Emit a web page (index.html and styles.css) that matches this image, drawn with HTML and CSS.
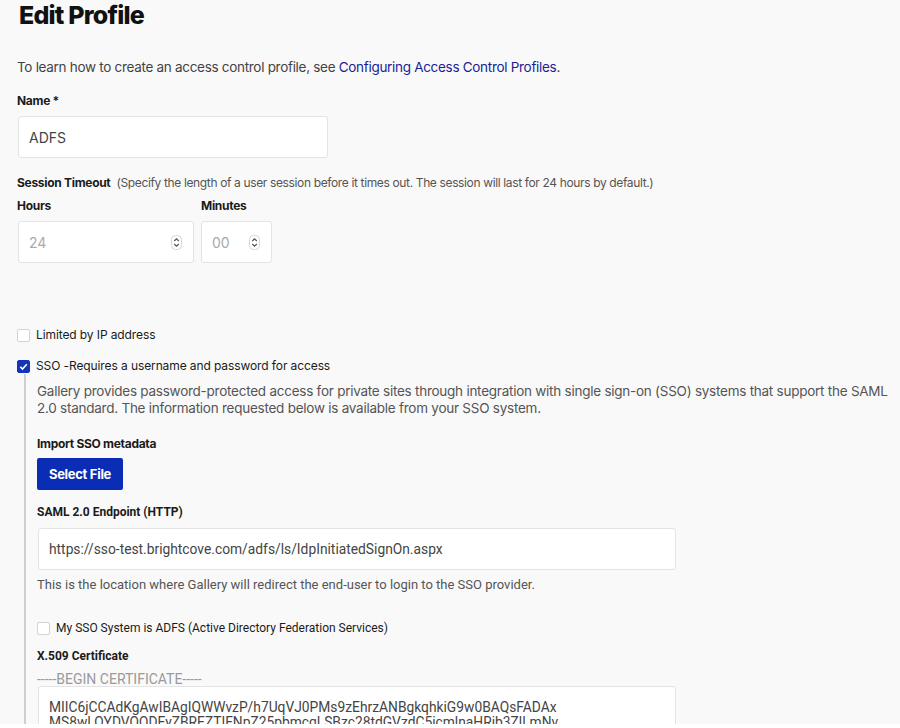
FILE: index.html
```html
<!DOCTYPE html>
<html>
<head>
<meta charset="utf-8">
<link rel="stylesheet" href="styles.css">
</head>
<body>
<div class="page">
  <h1 class="title">Edit Profile</h1>
  <p class="intro">To learn how to create an access control profile, see <a class="link" href="#">Configuring Access Control Profiles</a>.</p>

  <div class="label name-label">Name *</div>
  <div class="field name-field"><span class="val">ADFS</span></div>

  <div class="timeout-row"><span class="label">Session Timeout</span><span class="hint">(Specify the length of a user session before it times out. The session will last for 24 hours by default.)</span></div>

  <div class="time-grid">
    <div class="time-col">
      <div class="label">Hours</div>
      <div class="field num hours"><span class="ph">24</span>
        <svg class="spin" width="11" height="15" viewBox="0 0 11 15"><rect x="0.5" y="0.5" width="10" height="14" rx="4" fill="#fff" stroke="#d6d6d6"/><path d="M3.2 6 L5.5 3.8 L7.8 6" fill="none" stroke="#555" stroke-width="1.2"/><path d="M3.2 9 L5.5 11.2 L7.8 9" fill="none" stroke="#555" stroke-width="1.2"/></svg>
      </div>
    </div>
    <div class="time-col">
      <div class="label">Minutes</div>
      <div class="field num minutes"><span class="ph">00</span>
        <svg class="spin" width="11" height="15" viewBox="0 0 11 15"><rect x="0.5" y="0.5" width="10" height="14" rx="4" fill="#fff" stroke="#d6d6d6"/><path d="M3.2 6 L5.5 3.8 L7.8 6" fill="none" stroke="#555" stroke-width="1.2"/><path d="M3.2 9 L5.5 11.2 L7.8 9" fill="none" stroke="#555" stroke-width="1.2"/></svg>
      </div>
    </div>
  </div>

  <div class="check-row ip-row"><span class="box"></span><span class="check-text">Limited by IP address</span></div>
  <div class="check-row sso-row"><span class="box checked"><svg width="13" height="13" viewBox="0 0 13 13"><path d="M3.3 6.8 L5.5 9 L9.8 4.2" fill="none" stroke="#fff" stroke-width="1.6"/></svg></span><span class="check-text">SSO -Requires a username and password for access</span></div>

  <div class="sso-section">
    <p class="sso-desc">Gallery provides password-protected access for private sites through integration with single sign-on (SSO) systems that support the SAML 2.0 standard. The information requested below is available from your SSO system.</p>
    <div class="label import-label">Import SSO metadata</div>
    <button class="btn">Select File</button>

    <div class="label2 saml-label">SAML 2.0 Endpoint (HTTP)</div>
    <div class="field wide"><span class="val2">https://sso-test.brightcove.com/adfs/ls/IdpInitiatedSignOn.aspx</span></div>
    <div class="help">This is the location where Gallery will redirect the end-user to login to the SSO provider.</div>

    <div class="check-row adfs-row"><span class="box"></span><span class="check-text2">My SSO System is ADFS (Active Directory Federation Services)</span></div>

    <div class="label2 cert-label">X.509 Certificate</div>
    <div class="cert-begin">-----BEGIN CERTIFICATE-----</div>
    <div class="field wide cert">
      <div class="val2">MIIC6jCCAdKgAwIBAgIQWWvzP/h7UqVJ0PMs9zEhrzANBgkqhkiG9w0BAQsFADAx</div>
      <div class="val2">MS8wLQYDVQQDEyZBREZTIFNpZ25pbmcgLSBzc28tdGVzdC5icmlnaHRib3ZlLmNv</div>
    </div>
  </div>
</div>
</body>
</html>
```

FILE: styles.css
```css
html {
  margin: 0;
  padding: 0;
  background: #fff;
}
body {
  margin: 0;
  padding: 0;
  background: #f9f9f9;
  font-family: "Inter", "Noto Sans", sans-serif;
  color: #1b1b1b;
  height: 724px;
  overflow: hidden;
}
.page {
  padding: 0 0 0 17px;
}
.title {
  margin: 0;
  padding: 0 0 0 2px;
  font-size: 25px;
  font-weight: 800;
  line-height: 30px;
  letter-spacing: -0.8px;
  color: #111;
}
.intro {
  margin: 27px 0 0;
  font-size: 13.5px;
  line-height: 20px;
  color: #444;
  letter-spacing: -0.3px;
}
.link {
  color: #1a1d96;
  text-decoration: none;
}
.label {
  font-size: 12px;
  font-weight: 700;
  line-height: 16px;
  color: #1b1b1b;
  letter-spacing: -0.3px;
}
.name-label {
  margin-top: 16px;
}
.field {
  box-sizing: border-box;
  background: #fff;
  border: 1px solid #e4e4e4;
  border-radius: 3px;
  height: 42px;
  display: flex;
  align-items: center;
}
.name-field {
  margin: 7px 0 0 1px;
  width: 310px;
  padding-left: 10px;
}
.val {
  font-size: 14px;
  color: #444;
}
.timeout-row {
  margin-top: 17px;
  display: flex;
  align-items: baseline;
  gap: 6px;
}
.hint {
  font-size: 12px;
  color: #555;
  letter-spacing: -0.36px;
}
.time-grid {
  margin-top: 7px;
  display: flex;
  gap: 7px;
}
.time-col .label {
  margin-bottom: 7px;
}
.num {
  margin-left: 1px;
  padding: 0 11px 0 10px;
  justify-content: space-between;
}
.hours { width: 176px; }
.minutes { width: 71px; margin-left: 0; }
.ph {
  font-size: 14px;
  color: #aaa;
}
.check-row {
  display: flex;
  align-items: center;
  gap: 6px;
}
.box {
  box-sizing: border-box;
  width: 13px;
  height: 13px;
  border: 1px solid #d3d3d3;
  border-radius: 2px;
  background: #fff;
  display: flex;
}
.box.checked {
  background: #1535b8;
  border-color: #1535b8;
}
.box.checked svg {
  margin: -1px;
}
.check-text {
  font-size: 12px;
  color: #1b1b1b;
  line-height: 16px;
  letter-spacing: -0.1px;
}
.ip-row {
  margin-top: 64px;
}
.sso-row {
  margin-top: 15px;
}
.sso-section {
  margin-left: 7px;
  border-left: 2px solid #cfcfcf;
  padding-left: 10px;
  padding-top: 1px;
  padding-bottom: 40px;
}
.sso-desc {
  margin: 8px 0 0 1px;
  font-size: 13.5px;
  line-height: 17px;
  color: #555;
  letter-spacing: -0.25px;
}
.import-label {
  margin: 19px 0 0 1px;
}
.btn {
  margin: 6px 0 0 1px;
  width: 86px;
  height: 32px;
  border: none;
  border-radius: 2px;
  background: #0b2db5;
  color: #fff;
  font-family: "Inter", sans-serif;
  font-size: 13px;
  font-weight: 700;
  letter-spacing: -0.3px;
  padding: 0;
}
.label2 {
  font-family: "Roboto", sans-serif;
  font-size: 12px;
  font-weight: 700;
  line-height: 16px;
  color: #1b1b1b;
  margin-left: 1px;
}
.saml-label {
  margin-top: 14px;
}
.wide {
  margin: 8px 0 0 2px;
  width: 638px;
  padding-left: 10px;
}
.val2 {
  font-family: "Roboto", sans-serif;
  font-size: 13.8px;
  color: #444;
}
.help {
  margin: 6px 0 0 1px;
  font-family: "Roboto", sans-serif;
  font-size: 13px;
  line-height: 18px;
  color: #555;
}
.adfs-row {
  margin: 27px 0 0 1px;
}
.check-text2 {
  font-family: "Roboto", sans-serif;
  font-size: 12px;
  color: #1b1b1b;
}
.cert-label {
  margin-top: 13px;
}
.cert-begin {
  margin: 7px 0 0 1px;
  font-family: "Roboto", sans-serif;
  font-size: 14px;
  line-height: 16px;
  color: #9a9a9a;
}
.cert {
  height: 60px;
  flex-direction: column;
  align-items: flex-start;
  justify-content: flex-start;
  padding-top: 13px;
  margin-top: -1px;
}
.cert .val2 {
  line-height: 15px;
}
```
